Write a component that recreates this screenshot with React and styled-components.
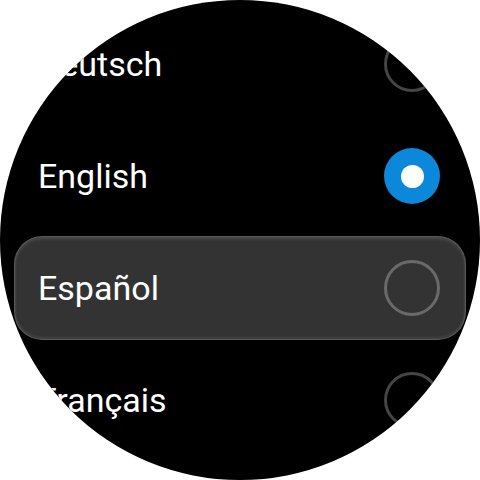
import React from "react";
import styled, { createGlobalStyle } from "styled-components";

const GlobalStyle = createGlobalStyle`
  html, body {
    margin: 0;
    padding: 0;
    background: #fff;
  }
`;

const Watch = styled.div`
  width: 480px;
  height: 480px;
  border-radius: 50%;
  background: #000;
  overflow: hidden;
  font-family: Roboto, "Noto Sans", sans-serif;
`;

const List = styled.ul`
  list-style: none;
  margin: 0;
  padding: 12px 14px 0;
  display: flex;
  flex-direction: column;
  gap: 8px;
`;

const Row = styled.li`
  height: 104px;
  box-sizing: border-box;
  display: flex;
  align-items: center;
  justify-content: space-between;
  padding: 0 25px 0 23px;
  border-radius: 28px;
  background: ${(p) => (p.focused ? "#333" : "transparent")};
  border: 1px solid ${(p) => (p.focused ? "rgba(255,255,255,0.18)" : "transparent")};
  box-shadow: ${(p) =>
    p.focused
      ? "inset 0 2px 3px rgba(255,255,255,0.12), inset 0 -2px 3px rgba(255,255,255,0.08)"
      : "none"};
`;

const Label = styled.span`
  color: #fff;
  font-size: 34px;
  font-weight: 400;
`;

const Radio = styled.span`
  width: 56px;
  height: 56px;
  box-sizing: border-box;
  border-radius: 50%;
  flex-shrink: 0;
  display: flex;
  align-items: center;
  justify-content: center;
  background: ${(p) => (p.checked ? "#0b88d9" : "transparent")};
  border: ${(p) => (p.checked ? "none" : "3px solid rgba(255,255,255,0.27)")};
  &::after {
    content: "";
    display: ${(p) => (p.checked ? "block" : "none")};
    width: 23px;
    height: 23px;
    border-radius: 50%;
    background: #fff;
  }
`;

const languages = [
  { name: "Deutsch" },
  { name: "English", checked: true },
  { name: "Español", focused: true },
  { name: "Français" },
];

export default function App() {
  return (
    <>
      <GlobalStyle />
      <Watch>
        <List>
          {languages.map((l) => (
            <Row key={l.name} focused={l.focused}>
              <Label>{l.name}</Label>
              <Radio checked={l.checked} />
            </Row>
          ))}
        </List>
      </Watch>
    </>
  );
}
